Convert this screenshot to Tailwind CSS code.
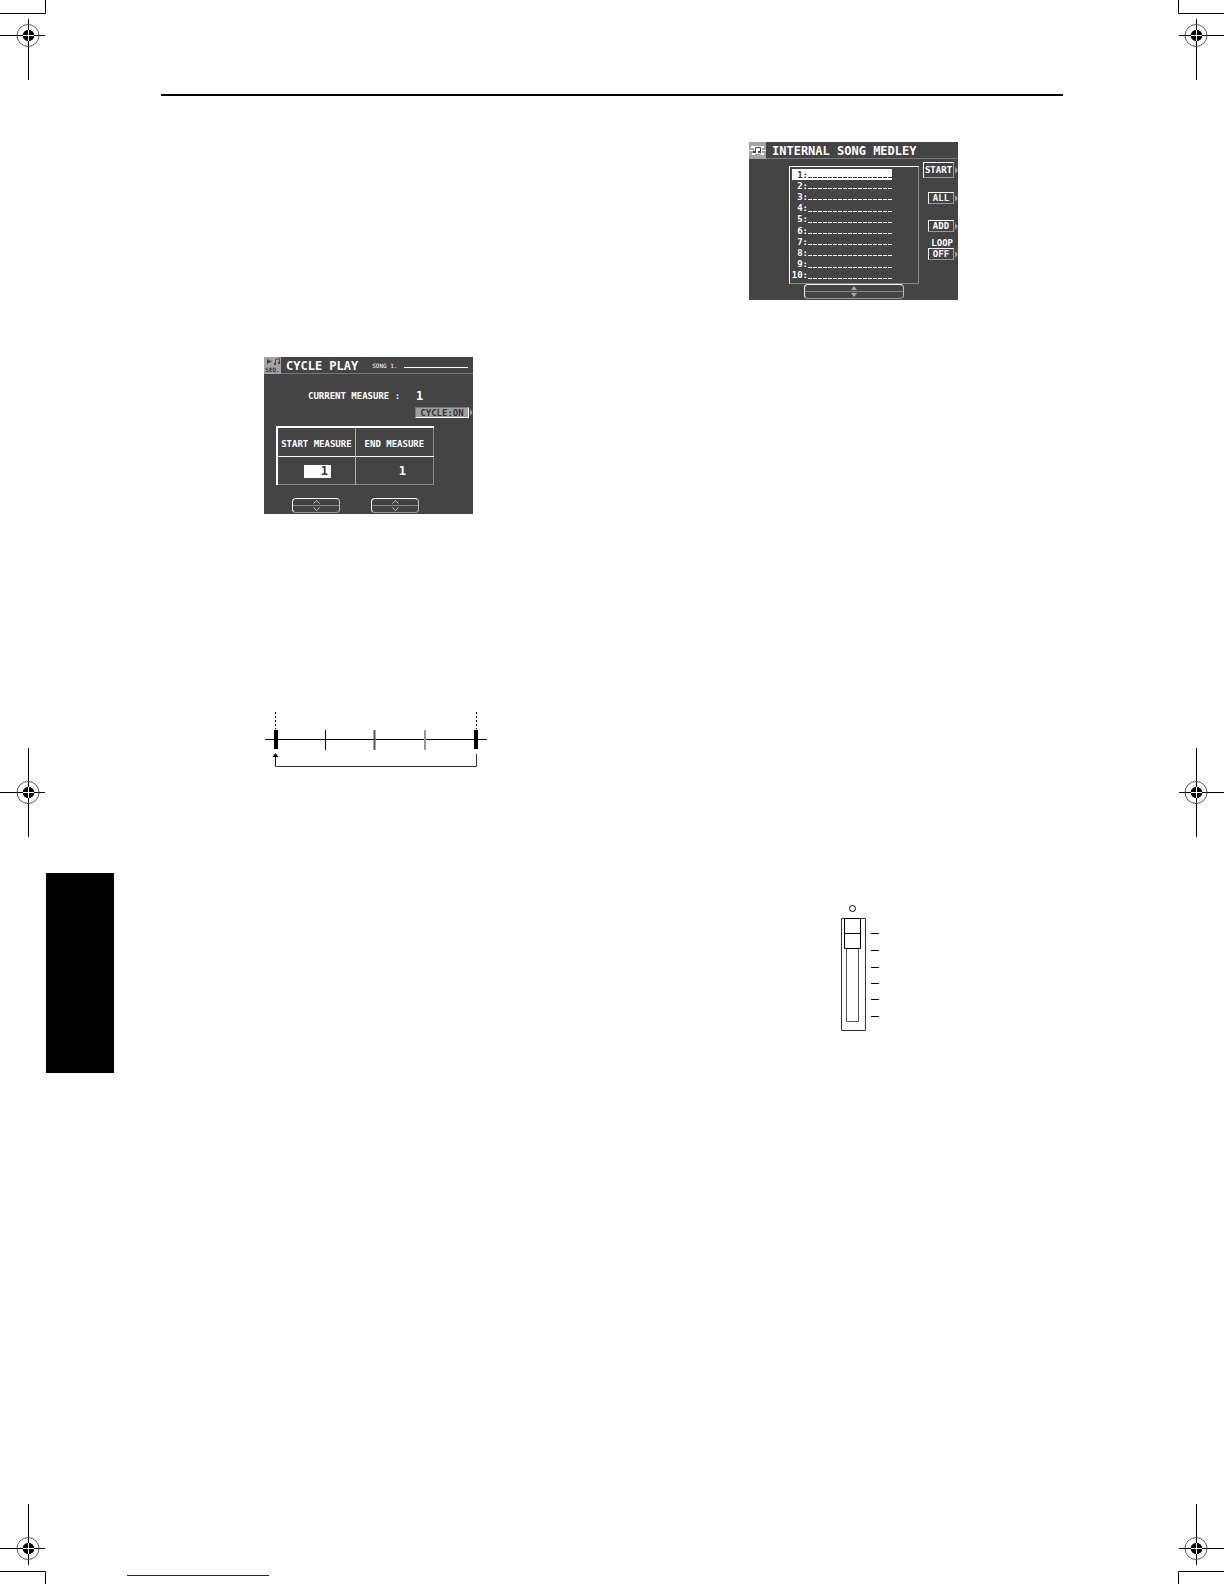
<!DOCTYPE html>
<html lang="en">
<head>
    <meta charset="UTF-8">
    <meta name="viewport" content="width=device-width, initial-scale=1.0">
    <title>Cycle Play / Internal Song Medley</title>
    <script src="https://cdn.jsdelivr.net/npm/@tailwindcss/browser@4"></script>
</head>
<body class="bg-white text-black min-h-screen flex font-['DejaVu_Sans_Mono',monospace]">

    <!-- Shared crop mark target -->
    <svg class="hidden">
        <symbol id="target" viewBox="0 0 24 24">
            <circle cx="12" cy="12.500" r="11" fill="none" stroke="#555" stroke-width="1"/>
            <circle cx="12.500" cy="12.500" r="5.800" fill="#000"/>
            <path d="M12.500 7v11M7 12.500h11" stroke="#fff" stroke-width="1"/>
        </symbol>
    </svg>

    <!-- Left crop marks -->
    <div class="w-[46px] shrink-0 flex flex-col justify-between">
        <svg class="block" width="46" height="80">
            <path d="M0 13.500h45.500V0M28.500 19v61M0 35.500h45" fill="none" stroke="#000"/>
            <use href="#target" x="16" y="23" width="24" height="24"/>
        </svg>
        <svg class="block" width="46" height="89">
            <path d="M28.500 0v89M0 44.500h45" fill="none" stroke="#000"/>
            <use href="#target" x="16" y="32" width="24" height="24"/>
        </svg>
        <svg class="block" width="46" height="80">
            <path d="M0 67.500h45.500V80M28.500 0v61M0 44.500h45" fill="none" stroke="#000"/>
            <use href="#target" x="16" y="32" width="24" height="24"/>
        </svg>
    </div>

    <div class="flex-1 flex flex-col justify-between">
        <div class="flex">
            <!-- Chapter tab -->
            <div class="w-[68px] h-[200px] mt-[873px] shrink-0 bg-black"></div>

            <main class="flex-1 ml-[47px] mr-[115px] mt-[94px]">
                <hr class="border-0 h-0.5 bg-black">

                <div class="grid grid-cols-2 gap-x-[68px]">
                    <div class="pl-[103px] pt-[261px]">
                        <!-- Cycle Play screen -->
                        <section class="w-[209px] h-[157px] bg-[#444] text-white font-bold text-[9px] leading-[10px] flex flex-col overflow-hidden">
                            <header class="h-[17px] flex items-center border-b border-[#777] shrink-0">
                                <div class="w-[17px] h-[17px] bg-[#a3a3a3] text-[#333] flex flex-col items-center shrink-0">
                                    <svg class="block" width="17" height="9">
                                        <path d="M3 2l5 2.500-5 2.500z" fill="#444"/>
                                        <path d="M11.500 7V2.500l4-1V6" fill="none" stroke="#444"/>
                                        <path d="M10 6h2v2h-2zM14 5h2v2h-2z" fill="#444"/>
                                    </svg>
                                    <span class="text-[6px] leading-[7px]">SEQ.</span>
                                </div>
                                <h2 class="ml-[5px] pt-0.5 text-[12px] leading-[16px]">CYCLE PLAY</h2>
                                <span class="ml-[14px] pt-0.5 text-[6px] leading-[8px] font-normal">SONG 1.</span>
                                <span class="ml-1.5 mt-1 w-[64px] h-px bg-white"></span>
                            </header>

                            <div class="flex items-center h-4 mt-[14px] pl-11">
                                <span class="w-[108px] whitespace-nowrap">CURRENT MEASURE :</span>
                                <span class="text-[12px]">1</span>
                            </div>
                            <div class="flex justify-end items-center gap-px mt-[3px]">
                                <button class="w-[54px] h-[11px] bg-[#a0a0a0] text-[#333] border border-t-[#777] border-l-[#777] border-white leading-[10px]">CYCLE:ON</button>
                                <svg width="3" height="7"><path d="M0 0l3 3.500L0 7z" fill="#999"/></svg>
                            </div>

                            <table class="ml-3 mt-2 w-[158px] h-[59px] shrink-0 table-fixed border-collapse border-t-2 border-l-2 border-r border-b border-t-white border-l-white border-r-[#888] border-b-[#888]">
                                <thead>
                                    <tr class="h-[29px] border-b border-white">
                                        <th class="p-0 pt-1 whitespace-nowrap border-r border-[#aaa] border-b-white">START MEASURE</th>
                                        <th class="p-0 pt-1 whitespace-nowrap">END MEASURE</th>
                                    </tr>
                                </thead>
                                <tbody>
                                    <tr class="text-[12px]">
                                        <td class="p-0 pt-0.5 border-r border-[#aaa]"><span class="block ml-[26px] w-[27px] h-[13px] leading-[13px] pr-[3px] text-right bg-white text-[#333]">1</span></td>
                                        <td class="p-0 pt-0.5 pr-[27px] text-right">1</td>
                                    </tr>
                                </tbody>
                            </table>

                            <div class="flex gap-[31px] ml-7 mt-[13px]">
                                <div class="w-12 h-[15px] shrink-0 rounded border border-white border-r-[#bbb] border-b-[#999] flex flex-col">
                                    <button aria-label="Start up" class="flex-1 flex items-center justify-center border-b border-[#888]"><svg width="7" height="4"><path d="M.5 3.500l3-3 3 3" fill="none" stroke="#bbb"/></svg></button>
                                    <button aria-label="Start down" class="flex-1 flex items-center justify-center"><svg width="7" height="4"><path d="M.5.500l3 3 3-3" fill="none" stroke="#bbb"/></svg></button>
                                </div>
                                <div class="w-12 h-[15px] shrink-0 rounded border border-white border-r-[#bbb] border-b-[#999] flex flex-col">
                                    <button aria-label="End up" class="flex-1 flex items-center justify-center border-b border-[#888]"><svg width="7" height="4"><path d="M.5 3.500l3-3 3 3" fill="none" stroke="#bbb"/></svg></button>
                                    <button aria-label="End down" class="flex-1 flex items-center justify-center"><svg width="7" height="4"><path d="M.5.500l3 3 3-3" fill="none" stroke="#bbb"/></svg></button>
                                </div>
                            </div>
                        </section>

                        <!-- Measures between start and end -->
                        <svg class="block mt-[198px]" width="224" height="56">
                            <path d="M11.500 0v17M212.500 0v17" stroke="#000" stroke-dasharray="2 2"/>
                            <path d="M1 27.500h222M61.500 18v20" stroke="#000"/>
                            <path d="M110.500 18v20" stroke="#555" stroke-width="2"/>
                            <path d="M161 18v20" stroke="#999" stroke-width="2"/>
                            <path d="M10 18h4v19h-4zM210 18h4v19h-4z" fill="#000"/>
                            <path d="M212.500 42v12.500H11.500" fill="none" stroke="#333"/>
                            <path d="M11.500 54V43" stroke="#000"/>
                            <path d="M11.500 41l3 4h-6z" fill="#000"/>
                        </svg>
                    </div>

                    <div class="pl-[103px] pt-[46px]">
                        <!-- Internal Song Medley screen -->
                        <section class="w-[209px] h-[158px] bg-[#444] text-white font-bold text-[9px] leading-[10px] flex flex-col overflow-hidden">
                            <header class="h-[17px] flex items-center border-b border-[#777] shrink-0">
                                <svg class="block bg-[#a3a3a3] shrink-0" width="17" height="17">
                                    <path d="M0 8.500h4M13 8.500h4" stroke="#fff"/>
                                    <path d="M2 4h4v2H2zM3 11h3v2H3zM13 4h2v2h-2zM12 11h3v2h-3z" fill="#fff"/>
                                    <path d="M5 4h8v8H5z" fill="#fff"/>
                                    <path d="M6.500 10V5.500h5V10" fill="none" stroke="#444"/>
                                    <path d="M4 9h3v2H4zM9 9h3v2H9z" fill="#444"/>
                                </svg>
                                <h2 class="ml-1.5 pt-0.5 text-[12px] leading-[16px] whitespace-nowrap">INTERNAL SONG MEDLEY</h2>
                            </header>

                            <div class="flex justify-between pl-10">
                                <div class="mt-[7px] w-[130px]">
                                    <ol id="songs" class="h-[118px] p-0.5 grid grid-rows-10 border border-t-white border-l-white border-r-[#888] border-b-[#888]"></ol>
                                </div>
                                <div class="flex flex-col items-end mt-[3px]">
                                    <div class="flex items-center gap-px">
                                        <button class="w-[31px] h-4 border border-white border-r-[#999] border-b-[#999]">START</button>
                                        <svg width="3" height="7"><path d="M0 0l3 3.500L0 7z" fill="#999"/></svg>
                                    </div>
                                    <div class="flex items-center gap-px mt-[14px]">
                                        <button class="w-[26px] h-3 leading-[11px] border border-white border-r-[#999] border-b-[#999]">ALL</button>
                                        <svg width="3" height="7"><path d="M0 0l3 3.500L0 7z" fill="#999"/></svg>
                                    </div>
                                    <div class="flex items-center gap-px mt-4">
                                        <button class="w-[26px] h-3 leading-[11px] border border-white border-r-[#999] border-b-[#999]">ADD</button>
                                        <svg width="3" height="7"><path d="M0 0l3 3.500L0 7z" fill="#999"/></svg>
                                    </div>
                                    <span id="loop" class="mt-1.5 mr-[5px]">LOOP</span>
                                    <div class="flex items-center gap-px">
                                        <button aria-describedby="loop" class="w-[26px] h-3 leading-[11px] border border-white border-r-[#999] border-b-[#999]">OFF</button>
                                        <svg width="3" height="7"><path d="M0 0l3 3.500L0 7z" fill="#999"/></svg>
                                    </div>
                                </div>
                            </div>

                            <div class="ml-[55px] w-[100px] h-[15px] shrink-0 rounded border border-white border-r-[#bbb] border-b-[#999] flex flex-col">
                                <button aria-label="Up" class="flex-1 flex items-center justify-center border-b border-[#888]"><svg width="6" height="4"><path d="M0 4l3-4 3 4z" fill="#aaa"/></svg></button>
                                <button aria-label="Down" class="flex-1 flex items-center justify-center"><svg width="6" height="4"><path d="M0 0l3 4 3-4z" fill="#aaa"/></svg></button>
                            </div>
                        </section>

                        <!-- Fader with scale ticks -->
                        <svg class="block ml-[92px] mt-[604px]" width="40" height="128" fill="none" stroke="#000">
                            <circle cx="11.500" cy="4.500" r="3"/>
                            <path d="M.5 14.500h24v112H.5z" stroke="#333"/>
                            <path d="M5.500 44v73.500h12V44" stroke="#555"/>
                            <path d="M3.500 14.500h16v30h-16zM3.500 29.500h16"/>
                            <path d="M30 29.500h8M30 46.500h8M30 63.500h8M30 79.500h8M30 95.500h8M30 112.500h8"/>
                        </svg>
                    </div>
                </div>
            </main>
        </div>

        <footer class="pl-[81px] pb-2">
            <a href="#" aria-label="Contents" class="block w-[142px] h-3 border-b border-[#1a1a8c]"></a>
        </footer>
    </div>

    <!-- Right crop marks -->
    <div class="w-[46px] shrink-0 flex flex-col justify-between">
        <svg class="block" width="46" height="80">
            <path d="M46 13.500H.5V0M18.500 19v61M1 35.500h45" fill="none" stroke="#000"/>
            <use href="#target" x="6" y="23" width="24" height="24"/>
        </svg>
        <svg class="block" width="46" height="89">
            <path d="M18.500 0v89M1 44.500h45" fill="none" stroke="#000"/>
            <use href="#target" x="6" y="32" width="24" height="24"/>
        </svg>
        <svg class="block" width="46" height="80">
            <path d="M46 67.500H.5V80M18.500 0v61M1 44.500h45" fill="none" stroke="#000"/>
            <use href="#target" x="6" y="32" width="24" height="24"/>
        </svg>
    </div>

    <script>
        // Fill the ten empty song slots, the first one is selected
        const songs = document.getElementById("songs");
        for (let i = 1; i <= 10; i++) {
            const li = document.createElement("li");
            li.className = i === 1 ? "flex items-center w-[100px] bg-white text-[#333]" : "flex items-center w-[100px]";
            li.innerHTML = `<span class="w-4 flex justify-end whitespace-nowrap">${i}:</span>
                <span class="mt-1.5 w-[84px] h-px bg-[repeating-linear-gradient(90deg,currentColor_0_4px,transparent_4px_5px)]"></span>`;
            songs.appendChild(li);
        }
    </script>
</body>
</html>
